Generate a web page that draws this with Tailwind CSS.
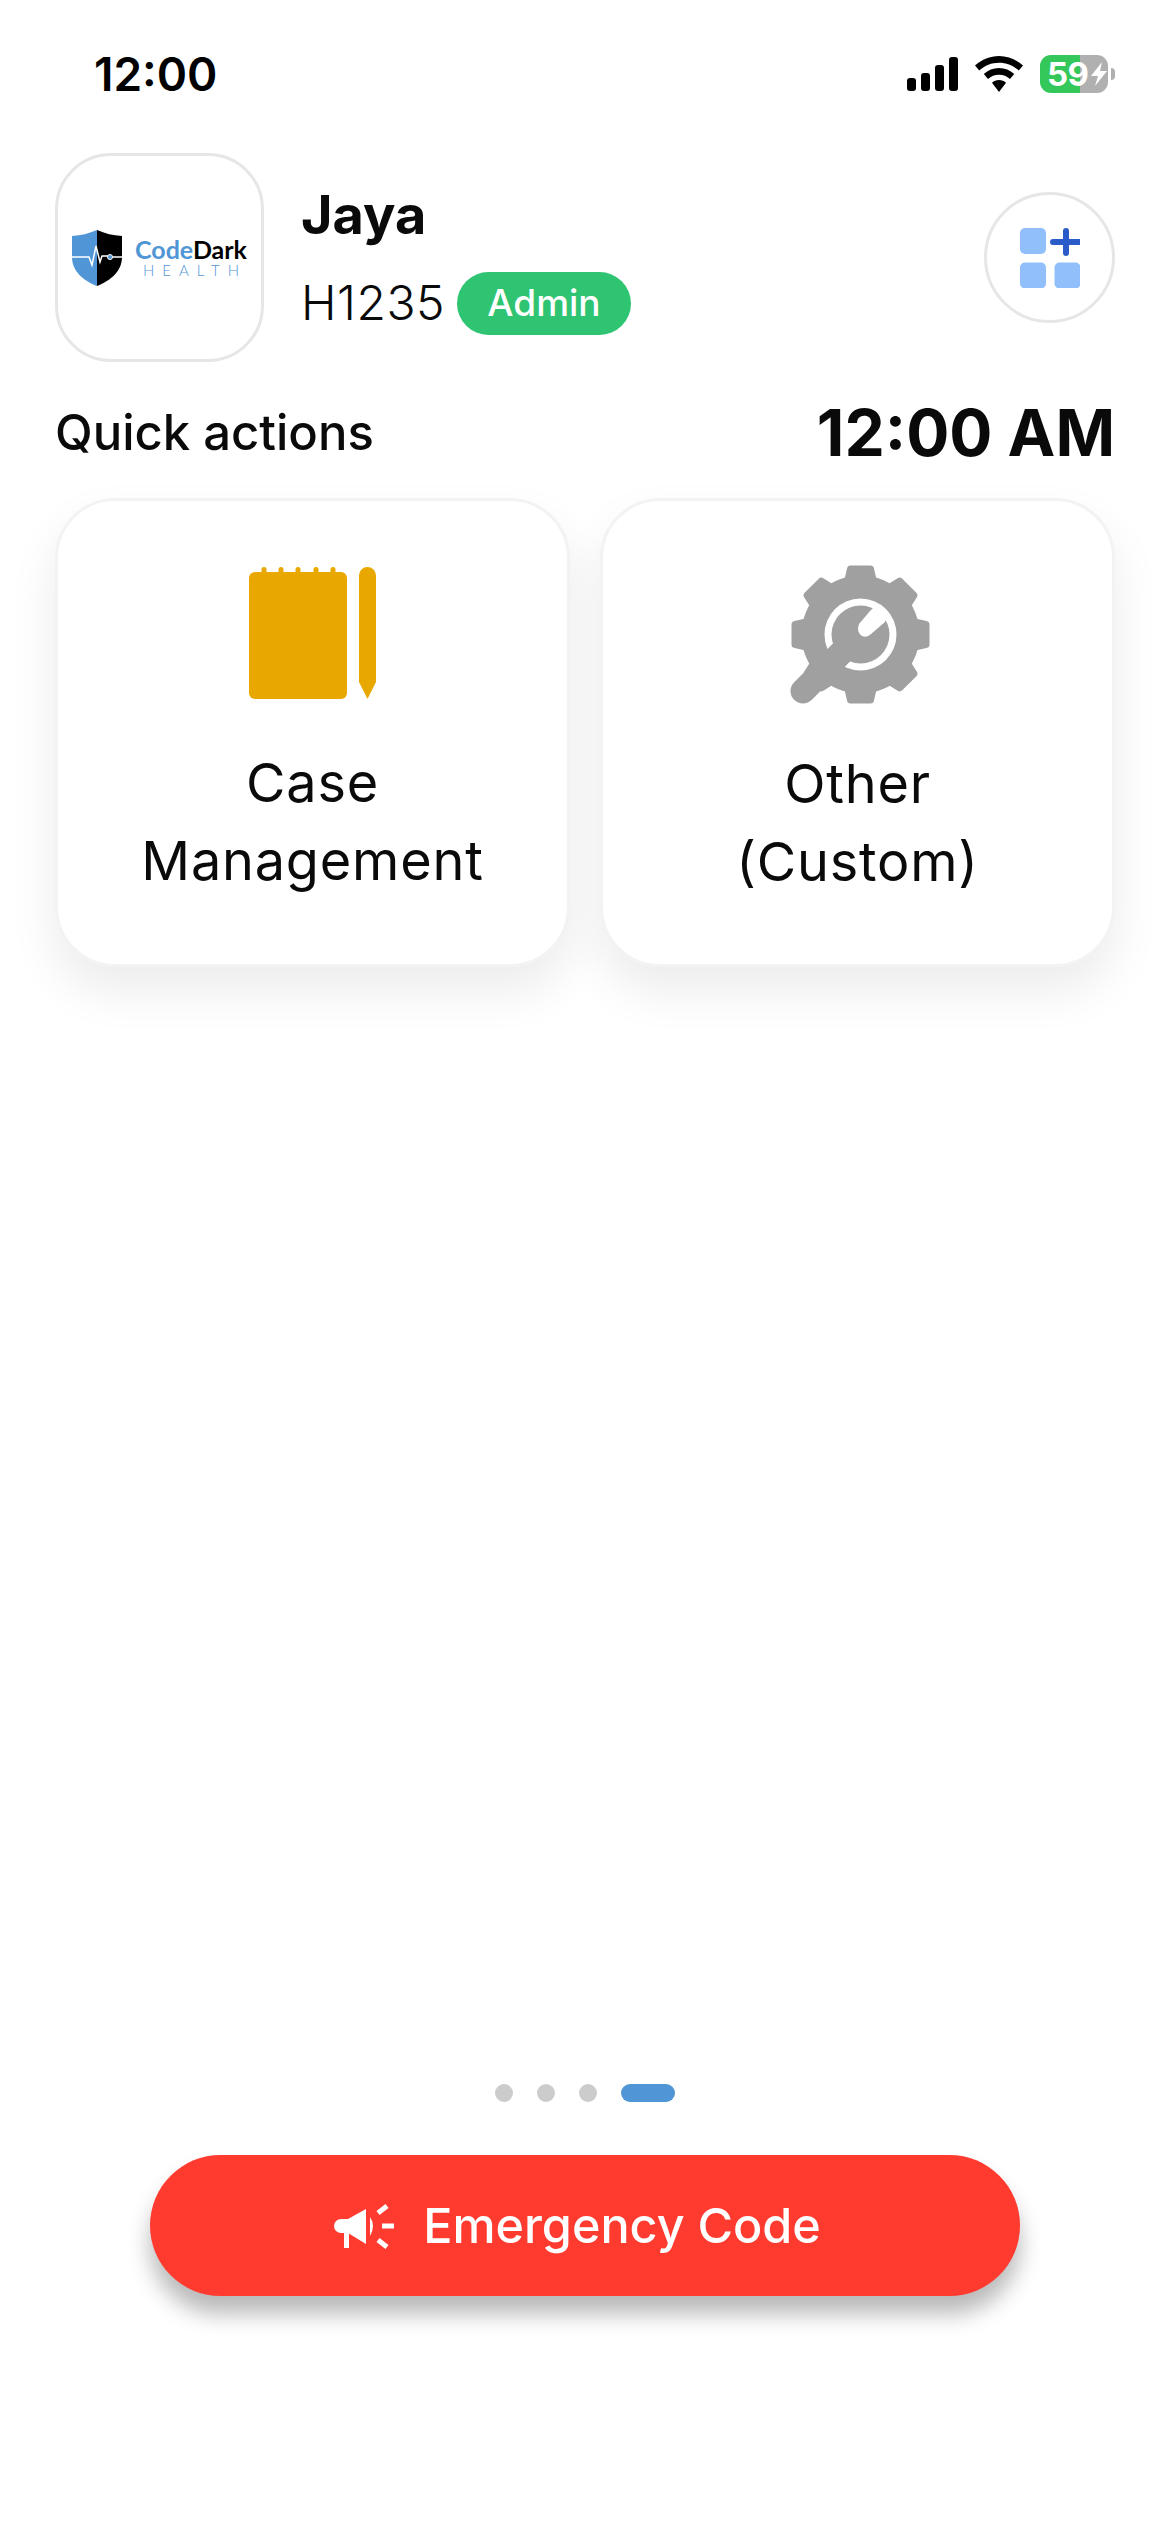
<!DOCTYPE html>
<html lang="en">
<head>
<meta charset="utf-8">
<script src="https://cdn.jsdelivr.net/npm/@tailwindcss/browser@4"></script>
</head>
<body>
<div class="w-[1170px] h-[2532px] bg-white flex flex-col font-['Inter',sans-serif] text-[#0a0a0a] overflow-hidden">
  <!-- status bar -->
  <div class="h-[153px] pl-[94px] pr-[55px] pb-[5px] flex items-center justify-between shrink-0">
    <span class="text-[46px] leading-[54px] font-semibold text-black">12:00</span>
    <div class="flex items-center">
      <div class="flex items-end gap-[5px] h-[34px]">
        <div class="w-[9px] h-[13px] rounded-[3px] bg-black"></div>
        <div class="w-[9px] h-[18px] rounded-[3px] bg-black"></div>
        <div class="w-[9px] h-[26px] rounded-[3px] bg-black"></div>
        <div class="w-[9px] h-[34px] rounded-[3px] bg-black"></div>
      </div>
      <svg class="ml-[17px]" width="48" height="36" viewBox="0 0 48 36" fill="#000">
        <path d="M24 0C15 0 7 3.500 0 9.500L4.200 14.500C10 9.500 16.500 6.800 24 6.800S38 9.500 43.800 14.500L48 9.500C41 3.500 33 0 24 0Z"/>
        <path d="M24 12C18.200 12 13 14.200 8.800 18L13 23C16 20.200 19.800 18.700 24 18.700S32 20.200 35 23L39.200 18C35 14.200 29.800 12 24 12Z"/>
        <path d="M24 24C21.300 24 18.800 25 17 26.700L24 36L31 26.700C29.200 25 26.700 24 24 24Z"/>
      </svg>
      <div class="ml-[17px] w-[68px] h-[38px] rounded-[11px] bg-[linear-gradient(to_right,#34c759_59%,#b0b0b0_59%)] flex items-center pl-[7px]">
        <span class="text-[33px] leading-[38px] font-bold text-white tracking-[-0.5px]">59</span>
        <svg class="ml-[2px]" width="16" height="24" viewBox="0 0 16 24" fill="#fff"><path d="M11 0L0 14H7L4 24L16 9H9L11 0Z"/></svg>
      </div>
      <div class="ml-[3px] w-[4px] h-[12px] rounded-r-[4px] bg-[#b0b0b0]"></div>
    </div>
  </div>

  <!-- profile row -->
  <div class="px-[55px] flex items-center justify-between shrink-0">
    <div class="flex items-center">
      <div class="w-[209px] h-[209px] rounded-[56px] border-[3px] border-[#e6e6e6] bg-white flex items-center pl-[14px] shrink-0">
        <svg width="50" height="56" viewBox="0 0 50 56" class="shrink-0">
          <path d="M25 0C17 3.500 9 5.500 0 6V27C0 41 11 50.500 25 56Z" fill="#5096d6"/>
          <path d="M25 0C33 3.500 41 5.500 50 6V27C50 41 39 50.500 25 56Z" fill="#000"/>
          <path d="M0 27H17L20 35L24 16L28 32L30 26H36M40 27H50" fill="none" stroke="#fff" stroke-width="1.500"/>
          <circle cx="38" cy="27" r="2.500" fill="#5096d6" stroke="#fff" stroke-width="1"/>
        </svg>
        <div class="ml-[14px] flex flex-col items-center w-[110px] shrink-0">
          <div class="text-[25px] leading-[25px] font-['Lato',sans-serif] font-bold whitespace-nowrap"><span class="text-[#5096d6]">Code</span><span class="text-black">Dark</span></div>
          <div class="text-[15px] leading-[16px] font-['Lato',sans-serif] font-light text-[#5096d6] tracking-[8px] whitespace-nowrap -mr-[8px]">HEALTH</div>
        </div>
      </div>
      <div class="ml-[37px] flex flex-col pt-[2px]">
        <div class="text-[54px] leading-[64px] font-bold">Jaya</div>
        <div class="mt-[25px] flex items-center">
          <span class="text-[48px] leading-[58px] font-light tracking-[0.5px]">H1235</span>
          <span class="ml-[12px] h-[63px] w-[174px] rounded-full bg-[#2fc472] text-white text-[37px] font-medium flex items-center justify-center">Admin</span>
        </div>
      </div>
    </div>
    <div class="w-[131px] h-[131px] rounded-full border-[3px] border-[#e6e6e6] flex items-center justify-center">
      <svg width="60" height="60" viewBox="0 0 60 60">
        <rect x="0" y="0" width="26" height="26" rx="5" fill="#90bffb"/>
        <rect x="0" y="34.500" width="26" height="26" rx="5" fill="#90bffb"/>
        <rect x="34.500" y="34.500" width="26" height="26" rx="5" fill="#90bffb"/>
        <path d="M46 3V25M33 14H59" stroke="#2a5bc8" stroke-width="6" stroke-linecap="round" fill="none"/>
      </svg>
    </div>
  </div>

  <!-- quick actions title -->
  <div class="mt-[31px] px-[55px] flex items-center justify-between shrink-0 h-[80px]">
    <span class="text-[49px] leading-[56px] font-[550]">Quick actions</span>
    <span class="text-[64px] leading-[80px] font-bold">12:00 AM</span>
  </div>

  <!-- cards -->
  <div class="mt-[25px] px-[55px] grid grid-cols-2 gap-[30px] shrink-0">
    <div class="h-[469px] rounded-[60px] border-[3px] border-[#f3f3f3] bg-white shadow-[0_24px_48px_rgba(0,0,0,0.08)] flex flex-col items-center pt-[66px]">
      <svg width="127" height="133" viewBox="0 0 127 133" fill="#e8a800">
        <rect x="0" y="5" width="98" height="127" rx="6"/>
        <rect x="12.500" y="0" width="5" height="10" rx="2.500"/>
        <rect x="29.500" y="0" width="5" height="10" rx="2.500"/>
        <rect x="46.500" y="0" width="5" height="10" rx="2.500"/>
        <rect x="64.500" y="0" width="5" height="10" rx="2.500"/>
        <rect x="81.500" y="0" width="5" height="10" rx="2.500"/>
        <path d="M110 8.500A8.500 8.500 0 0 1 127 8.500V115L118.500 132L110 115Z"/>
      </svg>
      <div class="mt-[44px] text-[54px] leading-[78px] font-normal text-center w-[400px] tracking-[0.8px]">Case Management</div>
    </div>
    <div class="h-[469px] rounded-[60px] border-[3px] border-[#f3f3f3] bg-white shadow-[0_24px_48px_rgba(0,0,0,0.08)] flex flex-col items-center pt-[50px]">
      <svg width="170" height="170" viewBox="0 0 170 170">
        <g transform="translate(87.500 83.500)" fill="#a0a0a0">
          <circle r="59"/>
          <path d="M-16 -55L-13.500 -66Q-13 -69 -10 -69H10Q13 -69 13.500 -66L16 -55Z"/>
          <path transform="rotate(45)" d="M-16 -55L-13.500 -66Q-13 -69 -10 -69H10Q13 -69 13.500 -66L16 -55Z"/>
          <path transform="rotate(90)" d="M-16 -55L-13.500 -66Q-13 -69 -10 -69H10Q13 -69 13.500 -66L16 -55Z"/>
          <path transform="rotate(135)" d="M-16 -55L-13.500 -66Q-13 -69 -10 -69H10Q13 -69 13.500 -66L16 -55Z"/>
          <path transform="rotate(180)" d="M-16 -55L-13.500 -66Q-13 -69 -10 -69H10Q13 -69 13.500 -66L16 -55Z"/>
          <path transform="rotate(225)" d="M-16 -55L-13.500 -66Q-13 -69 -10 -69H10Q13 -69 13.500 -66L16 -55Z"/>
          <path transform="rotate(270)" d="M-16 -55L-13.500 -66Q-13 -69 -10 -69H10Q13 -69 13.500 -66L16 -55Z"/>
          <path transform="rotate(315)" d="M-16 -55L-13.500 -66Q-13 -69 -10 -69H10Q13 -69 13.500 -66L16 -55Z"/>
          <circle r="36" fill="#fff"/>
          <circle r="29"/>
        </g>
        <path d="M30 140L80 90" stroke="#a0a0a0" stroke-width="25" stroke-linecap="round" fill="none"/>
        <path d="M97 60L86 73Q83 81 89 85Q94 87 98 83L112 71L114 65L111 57L103 54Z" fill="#fff"/>
      </svg>
      <div class="mt-[24px] text-[54px] leading-[78px] font-normal text-center w-[400px] tracking-[0.8px]">Other<br>(Custom)</div>
    </div>
  </div>

  <div class="flex-1"></div>

  <!-- pager -->
  <div class="flex items-center justify-center gap-[24px] shrink-0">
    <div class="w-[18px] h-[18px] rounded-full bg-[#cccccc]"></div>
    <div class="w-[18px] h-[18px] rounded-full bg-[#cccccc]"></div>
    <div class="w-[18px] h-[18px] rounded-full bg-[#cccccc]"></div>
    <div class="w-[54px] h-[18px] rounded-full bg-[#5096d6]"></div>
  </div>

  <!-- button -->
  <div class="mt-[53px] mb-[236px] flex justify-center shrink-0">
    <div class="w-[870px] h-[141px] rounded-full bg-[#ff3b30] shadow-[0_18px_22px_rgba(0,0,0,0.28)] flex items-center justify-center text-white pr-[16px]">
      <svg width="62" height="50" viewBox="12 20 62 50" fill="#fff">
        <path d="M20 38H27V52H20A7 7 0 0 1 13 45A7 7 0 0 1 20 38Z"/>
        <path d="M27 38L45 28V63L27 52Z"/>
        <rect x="23" y="52" width="5" height="15"/>
        <path d="M49 36Q55 45 49 55Z"/>
        <path d="M57 32L66 25M61 45H73M57 59L66 66" stroke="#fff" stroke-width="5" fill="none"/>
      </svg>
      <span class="ml-[28px] text-[48.500px] leading-[56px] font-medium">Emergency Code</span>
    </div>
  </div>
</div>
</body>
</html>
